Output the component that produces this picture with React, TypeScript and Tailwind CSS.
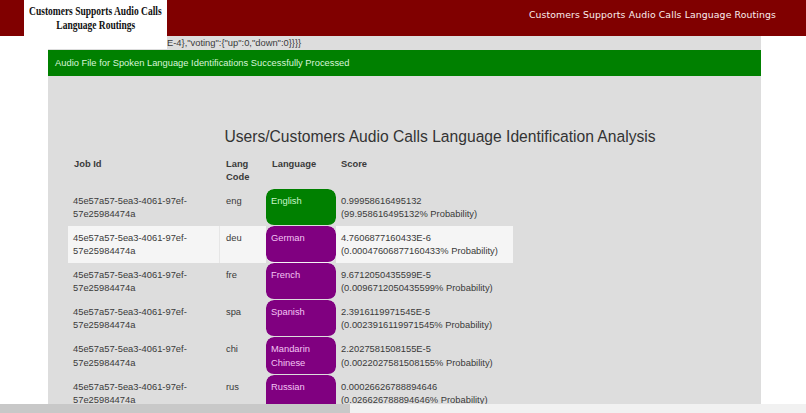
const rows = [
  { code: 'eng', lang: 'English', score: '0.99958616495132', prob: '(99.958616495132% Probability)', color: 'bg-[#008000]', textColor: 'text-[#c8f5c8]' },
  { code: 'deu', lang: 'German', score: '4.7606877160433E-6', prob: '(0.00047606877160433% Probability)', color: 'bg-[#800080]', textColor: 'text-[#f3c4f3]', striped: true },
  { code: 'fre', lang: 'French', score: '9.6712050435599E-5', prob: '(0.0096712050435599% Probability)', color: 'bg-[#800080]', textColor: 'text-[#f3c4f3]' },
  { code: 'spa', lang: 'Spanish', score: '2.3916119971545E-5', prob: '(0.0023916119971545% Probability)', color: 'bg-[#800080]', textColor: 'text-[#f3c4f3]' },
  { code: 'chi', lang: 'Mandarin Chinese', score: '2.2027581508155E-5', prob: '(0.0022027581508155% Probability)', color: 'bg-[#800080]', textColor: 'text-[#f3c4f3]' },
  { code: 'rus', lang: 'Russian', score: '0.00026626788894646', prob: '(0.026626788894646% Probability)', color: 'bg-[#800080]', textColor: 'text-[#f3c4f3]' },
]

export default function App() {
  return (
    <div className="relative flex h-[413px] w-[806px] flex-col overflow-hidden bg-white font-['Liberation_Sans',Arial,sans-serif] text-[9.35px] leading-[13.3px] text-[#3a3a3a]">
      {/* Top bar */}
      <header className="flex h-9 shrink-0 items-start justify-end bg-[#800000] pr-[30px] pt-[8px]">
        <span className="font-['DejaVu_Sans',sans-serif] text-[9.3px] leading-[14px] tracking-[0.12px] text-[#fbeeee]">
          Customers Supports Audio Calls Language Routings
        </span>
      </header>

      {/* Logo sits over the header and the page */}
      <div className="absolute left-6 top-0 flex h-[49px] w-[143px] flex-col items-center bg-white pt-[5px] text-center font-['Liberation_Serif',serif] text-[11.5px] font-bold leading-[13.5px] text-[#111]">
        <span className="scale-x-[0.825] whitespace-nowrap">Customers Supports Audio Calls</span>
        <span className="scale-x-[0.825] whitespace-nowrap">Language Routings</span>
      </div>

      <main className="ml-12 w-[713px] flex-1 overflow-hidden bg-[#dddddd]">
        <div className="h-[14px] overflow-hidden whitespace-nowrap pl-[119px] leading-[15px]">
          {'E-4},"voting":{"up":0,"down":0}}}}'}
        </div>
        <div className="flex h-[26px] items-center bg-[#008000] px-[7px] pt-px text-[#d8f5d8]">
          Audio File for Spoken Language Identifications Successfully Processed
        </div>
        <h1 className="mt-[51px] pl-[71px] text-center text-[15.65px] leading-[20px] text-[#333]">
          Users/Customers Audio Calls Language Identification Analysis
        </h1>
        <table className="ml-5 mt-[5px] w-[445px] table-fixed border-separate border-spacing-0">
          <thead>
            <tr className="align-top font-bold">
              <th className="w-[152px] px-[6px] pb-[4px] pt-[6px] text-left">Job Id</th>
              <th className="w-[46px] px-[6px] pb-[4px] pt-[6px] text-left">Lang Code</th>
              <th className="w-[70px] px-[6px] pb-[4px] pt-[6px] text-left">Language</th>
              <th className="px-[5px] pb-[4px] pt-[6px] text-left">Score</th>
            </tr>
          </thead>
          <tbody>
            {rows.map(r => (
              <tr key={r.code} className={r.striped ? 'bg-[#f5f5f5] align-top' : 'align-top'}>
                <td className={`h-[37.2px] border-r px-[5px] pb-[4px] pt-[6px] ${r.striped ? 'border-r-[#e6e6e6]' : 'border-r-transparent'}`}>
                  45e57a57-5ea3-4061-97ef-57e25984474a
                </td>
                <td className="px-[6px] pb-[4px] pt-[6px]">{r.code}</td>
                <td className={`rounded-[8px] border-b border-b-transparent bg-clip-padding px-[5px] pb-[4px] pt-[6px] ${r.color} ${r.textColor}`}>{r.lang}</td>
                <td className="px-[5px] pb-[4px] pt-[6px]">
                  {r.score}
                  <br />
                  {r.prob}
                </td>
              </tr>
            ))}
          </tbody>
        </table>
      </main>

      {/* Horizontal scrollbar */}
      <div className="absolute bottom-0 left-0 h-[9px] w-full bg-[#f1f1f1]">
        <div className="h-full w-[350px] bg-[#c8c8c8]" />
      </div>
    </div>
  )
}
